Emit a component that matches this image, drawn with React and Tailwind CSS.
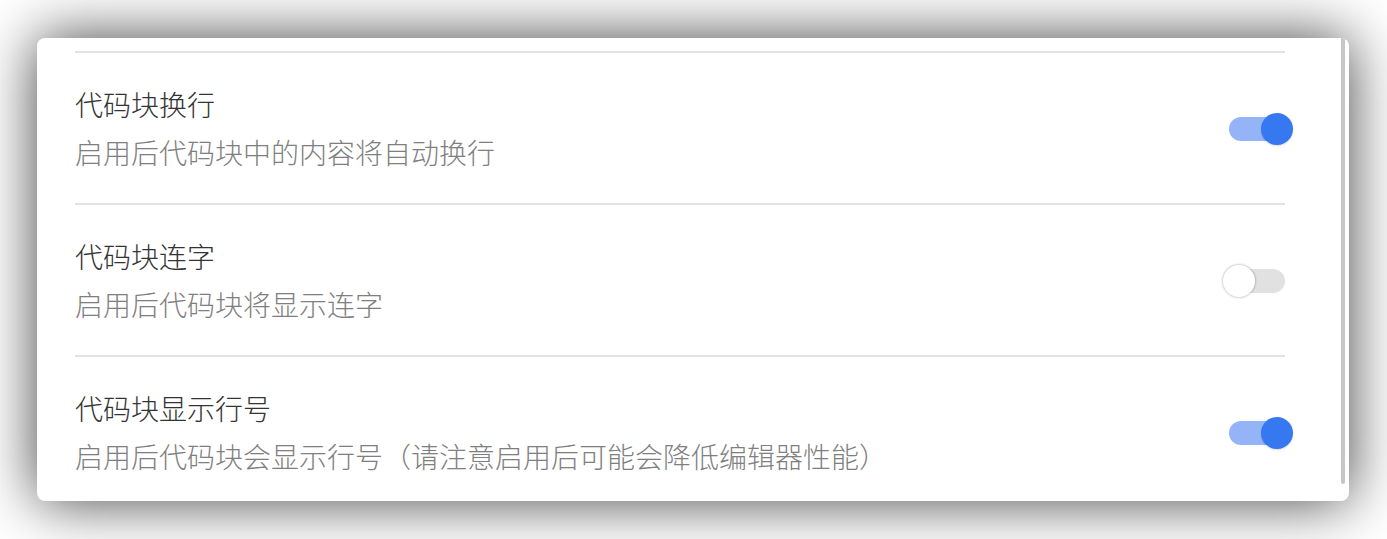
import { useState } from 'react';

const settings = [
  {
    key: 'wrap',
    title: '代码块换行',
    desc: '启用后代码块中的内容将自动换行',
    on: true
  },
  {
    key: 'ligature',
    title: '代码块连字',
    desc: '启用后代码块将显示连字',
    on: false
  },
  {
    key: 'lineNumbers',
    title: '代码块显示行号',
    desc: '启用后代码块会显示行号（请注意启用后可能会降低编辑器性能）',
    on: true
  }
];

function Toggle({ checked, onChange }) {
  return (
    <button
      type="button"
      onClick={onChange}
      className="relative w-[56px] h-[24px] mt-[2px] shrink-0 cursor-pointer"
    >
      <span
        className={
          checked
            ? 'absolute inset-0 rounded-full bg-[#94b4f7]'
            : 'absolute inset-0 rounded-full bg-[#e1e1e1]'
        }
      />
      <span
        className={
          checked
            ? 'absolute top-[-4px] left-[32px] w-[32px] h-[32px] rounded-full bg-[#3578f0] shadow-[0_1px_2px_rgba(0,0,0,0.15)]'
            : 'absolute top-[-4px] left-[-6px] w-[32px] h-[32px] rounded-full bg-white shadow-[0_0_2px_1px_rgba(0,0,0,0.18)]'
        }
      />
    </button>
  );
}

export default function App() {
  const [values, setValues] = useState(
    Object.fromEntries(settings.map(s => [s.key, s.on]))
  );

  const toggle = key => setValues(prev => ({ ...prev, [key]: !prev[key] }));

  return (
    <div className="w-full h-[539px] bg-white pt-[38px] pl-[37px] font-['Noto_Sans_CJK_SC',sans-serif]">
      <div className="relative w-[1312px] h-[463px] bg-white rounded-[8px] overflow-hidden shadow-[0_0_60px_rgba(0,0,0,0.75)]">
        <div className="pt-[13px] pl-[38px] pr-[64px]">
          {settings.map(s => (
            <div
              key={s.key}
              className="flex items-center border-t-2 border-[#e3e3e3] h-[152px]"
            >
              <div className="flex-1 flex flex-col gap-[8px]">
                <div className="text-[28px] leading-[40px] font-light text-[#333333]">
                  {s.title}
                </div>
                <div className="text-[28px] leading-[40px] font-light text-[#7f7f7f]">
                  {s.desc}
                </div>
              </div>
              <Toggle checked={values[s.key]} onChange={() => toggle(s.key)} />
            </div>
          ))}
        </div>
        {/* scrollbar */}
        <div className="absolute top-0 right-[4px] w-[4px] h-[446px] rounded-b-full bg-[#c6c6c6]" />
      </div>
    </div>
  );
}
